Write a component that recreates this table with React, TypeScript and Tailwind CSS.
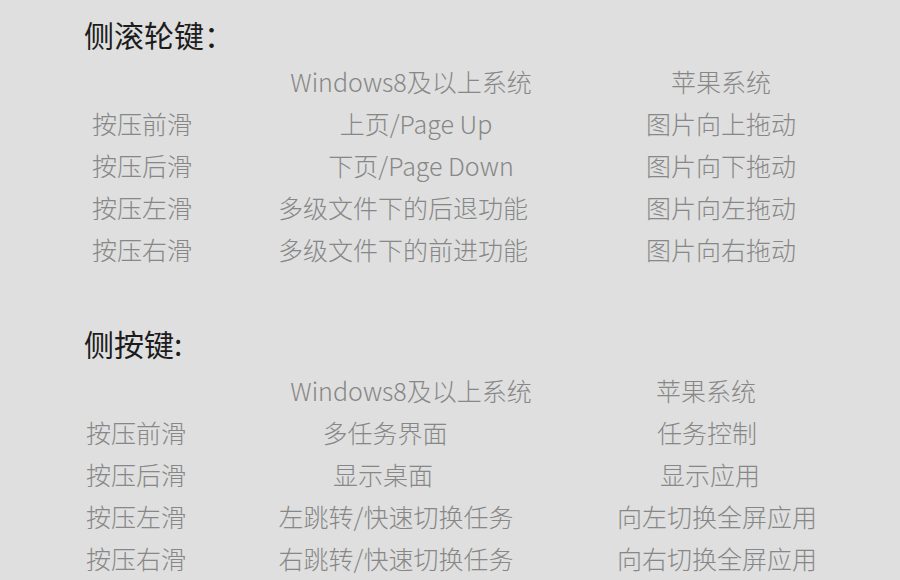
type Row = { label: string; win: string; mac: string; winCls: string; macCls: string };

const wheelRows: Row[] = [
  { label: "", win: "Windows8及以上系统", mac: "苹果系统", winCls: "", macCls: "" },
  { label: "按压前滑", win: "上页/Page Up", mac: "图片向上拖动", winCls: "pl-[10px]", macCls: "" },
  { label: "按压后滑", win: "下页/Page Down", mac: "图片向下拖动", winCls: "pl-[20px]", macCls: "" },
  { label: "按压左滑", win: "多级文件下的后退功能", mac: "图片向左拖动", winCls: "pr-[16px]", macCls: "" },
  { label: "按压右滑", win: "多级文件下的前进功能", mac: "图片向右拖动", winCls: "pr-[16px]", macCls: "" },
];

const sideRows: Row[] = [
  { label: "", win: "Windows8及以上系统", mac: "苹果系统", winCls: "", macCls: "pr-[30px]" },
  { label: "按压前滑", win: "多任务界面", mac: "任务控制", winCls: "pr-[52px]", macCls: "pr-[28px]" },
  { label: "按压后滑", win: "显示桌面", mac: "显示应用", winCls: "pr-[56px]", macCls: "pr-[22px]" },
  { label: "按压左滑", win: "左跳转/快速切换任务", mac: "向左切换全屏应用", winCls: "pr-[30px]", macCls: "pr-[8px]" },
  { label: "按压右滑", win: "右跳转/快速切换任务", mac: "向右切换全屏应用", winCls: "pr-[30px]", macCls: "pr-[8px]" },
];

function Section({ title, rows, indent }: { title: string; rows: Row[]; indent: string }) {
  return (
    <div>
      <h2 className="pl-[84px] text-[30px] leading-[40px] font-normal text-[#1c1c1c]">{title}</h2>
      <div className="mt-[6px] grid grid-cols-[231px_360px_260px]">
        {rows.map((r, i) => (
          <div key={i} className="contents">
            <div className={`${indent} h-[42px] leading-[42px]`}>{r.label}</div>
            <div className={`${r.winCls} h-[42px] leading-[42px] text-center whitespace-nowrap`}>{r.win}</div>
            <div className={`${r.macCls} h-[42px] leading-[42px] text-center whitespace-nowrap`}>{r.mac}</div>
          </div>
        ))}
      </div>
    </div>
  );
}

export default function App() {
  return (
    <div
      className="w-[900px] h-[580px] overflow-hidden bg-[#dfdfdf] pt-[14px] text-[25px] font-light text-[#878787]"
      style={{ fontFamily: '"Noto Sans CJK SC", "Noto Sans", sans-serif' }}
    >
      <Section title="侧滚轮键：" rows={wheelRows} indent="pl-[92px]" />
      <div className="mt-[53px]">
        <Section title="侧按键:" rows={sideRows} indent="pl-[86px]" />
      </div>
    </div>
  );
}
